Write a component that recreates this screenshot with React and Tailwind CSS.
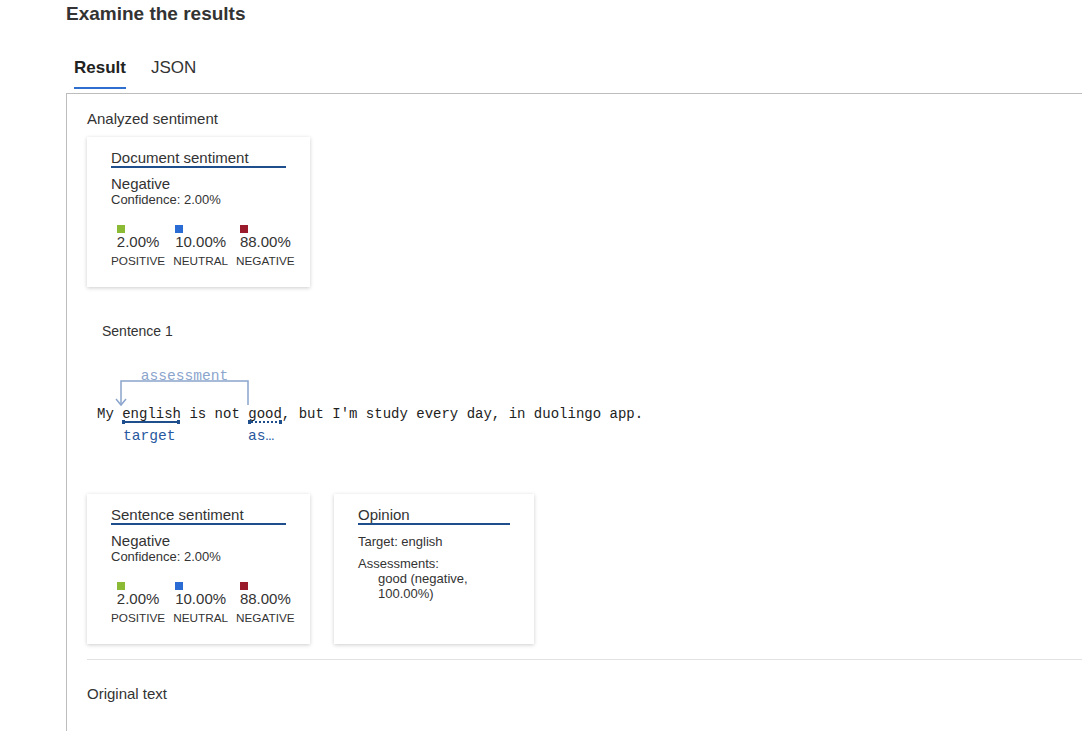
import React from "react";

const scores = [
  { label: "POSITIVE", value: "2.00%", color: "bg-[#8bbb35]" },
  { label: "NEUTRAL", value: "10.00%", color: "bg-[#2b6bd4]" },
  { label: "NEGATIVE", value: "88.00%", color: "bg-[#9a1b2c]" },
];

const Card = ({ title, width, children }) => (
  <div
    className={`${width} h-[150px] bg-white px-6 pt-3 shadow-[0_1px_4px_rgba(0,0,0,0.2)]`}
  >
    <div className="border-b-2 border-[#1f4e8c] text-[15px] leading-[17px] text-[#333]">
      {title}
    </div>
    {children}
  </div>
);

const SentimentCard = ({ title }) => (
  <Card title={title} width="w-[223px]">
    <div className="mt-[7px] text-[15px] leading-[17px]">Negative</div>
    <div className="text-[13px] leading-[15px]">Confidence: 2.00%</div>
    <div className="mt-[18px] flex gap-[8px]">
      {scores.map((s) => (
        <div key={s.label} className="flex flex-col items-center">
          <div className="flex flex-col items-start">
            <span className={`h-2 w-2 ${s.color}`} />
            <span className="text-[15px] leading-[17px]">{s.value}</span>
          </div>
          <div className="mt-1 text-[11.75px] leading-[14px]">{s.label}</div>
        </div>
      ))}
    </div>
  </Card>
);

// sentence with the target / assessment markup drawn over it
const Annotation = () => (
  <svg width="620" height="100" className="ml-px mt-[15px] block">
    <g fill="none" stroke="#8ba5cd" strokeWidth="1.5">
      <path d="M160 50 V26 H33 V50" />
      <path d="M28 44 L33 50 L38 44" />
    </g>
    <text
      x="96.5"
      y="24.5"
      textAnchor="middle"
      fill="#8ba5cd"
      fontFamily="'Liberation Mono', monospace"
      fontSize="14.6"
    >
      assessment
    </text>
    <text
      x="9"
      y="63"
      fill="#222"
      fontFamily="'Liberation Mono', monospace"
      fontSize="14"
    >
      My english is not good, but I'm study every day, in duolingo app.
    </text>
    <g fill="#1f4e8c">
      <rect x="34" y="66" width="58" height="2" />
      <rect x="34" y="65" width="3" height="4" />
      <rect x="89" y="65" width="3" height="4" />
      <rect x="160" y="65" width="3" height="4" />
      <rect x="191" y="65" width="3" height="4" />
    </g>
    <line
      x1="163"
      y1="67"
      x2="191"
      y2="67"
      stroke="#1f4e8c"
      strokeWidth="2"
      strokeDasharray="2 2"
    />
    <g fill="#2858a0" fontFamily="'Liberation Mono', monospace" fontSize="14.6">
      <text x="35" y="85">target</text>
      <text x="160" y="85">as…</text>
    </g>
  </svg>
);

const App = () => {
  return (
    <div className="min-h-screen bg-white pl-[66px] font-['Liberation_Sans',Arial,sans-serif] text-[#333]">
      <h1 className="text-[19px] font-bold leading-[28px] text-[#333]">
        Examine the results
      </h1>

      <div className="mt-[30px] flex items-start gap-[25px] pl-[8px]">
        <div className="border-b-2 border-[#2f6fd0] pb-[9px] text-[17px] font-bold leading-[20px] text-[#222]">
          Result
        </div>
        <div className="text-[17px] leading-[20px] text-[#333]">JSON</div>
      </div>

      <div className="mt-[4px] border-l border-t border-[#bdbdbd] pb-[40px] pl-[20px] pt-[16px]">
        <div className="text-[15px] leading-[18px]">Analyzed sentiment</div>

        <div className="mt-[9px]">
          <SentimentCard title="Document sentiment" />
        </div>

        <div className="mt-[36px] pl-[15px] text-[14px] leading-[17px]">
          Sentence 1
        </div>

        <Annotation />

        <div className="mt-[39px] flex gap-6">
          <SentimentCard title="Sentence sentiment" />
          <Card title="Opinion" width="w-[200px]">
            <div className="mt-[9px] text-[13px] leading-[15px]">
              Target: english
            </div>
            <div className="mt-[7px] text-[13px] leading-[15px]">
              Assessments:
            </div>
            <div className="pl-5 text-[13px] leading-[15px]">
              good (negative, 100.00%)
            </div>
          </Card>
        </div>

        <div className="mt-[15px] h-px bg-[#e2e2e2]" />

        <div className="mt-[25px] text-[15px] leading-[18px]">Original text</div>
      </div>
    </div>
  );
};

export default App;
